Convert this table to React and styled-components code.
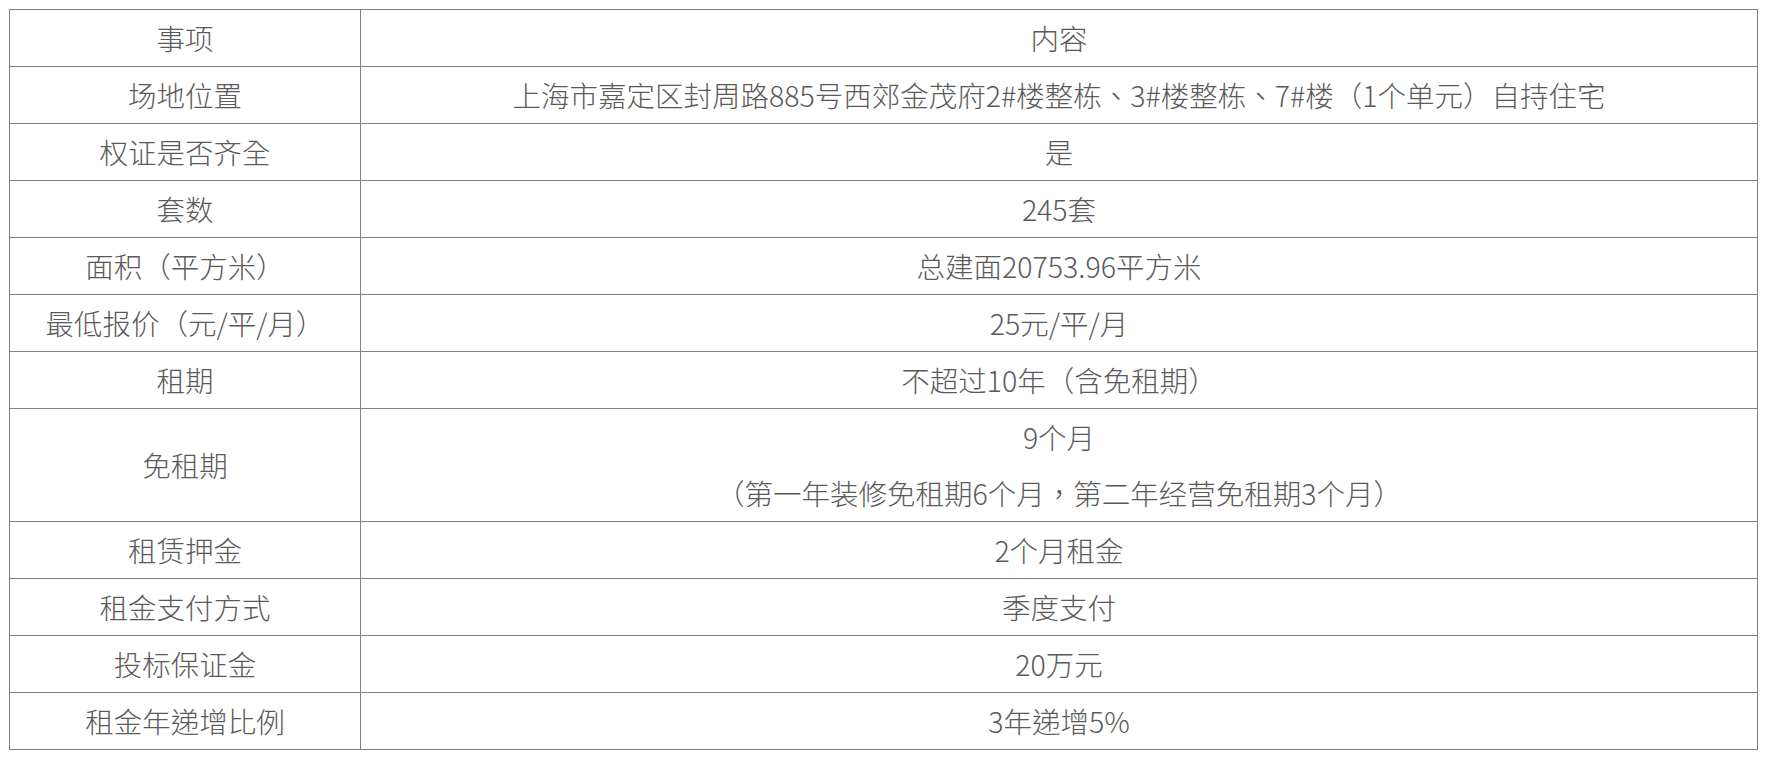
import React from 'react';
import styled, { createGlobalStyle } from 'styled-components';

const rows = [
  { label: '事项', value: ['内容'] },
  { label: '场地位置', value: ['上海市嘉定区封周路885号西郊金茂府2#楼整栋、3#楼整栋、7#楼（1个单元）自持住宅'] },
  { label: '权证是否齐全', value: ['是'] },
  { label: '套数', value: ['245套'] },
  { label: '面积（平方米）', value: ['总建面20753.96平方米'] },
  { label: '最低报价（元/平/月）', value: ['25元/平/月'] },
  { label: '租期', value: ['不超过10年（含免租期）'] },
  { label: '免租期', value: ['9个月', '（第一年装修免租期6个月，第二年经营免租期3个月）'] },
  { label: '租赁押金', value: ['2个月租金'] },
  { label: '租金支付方式', value: ['季度支付'] },
  { label: '投标保证金', value: ['20万元'] },
  { label: '租金年递增比例', value: ['3年递增5%'] },
];

const GlobalStyle = createGlobalStyle`
  html, body {
    margin: 0;
    padding: 0;
    background: #fff;
  }
`;

const Page = styled.div`
  padding: 9px 9px 10px 9px;
  font-family: "Noto Sans CJK TC", "Noto Sans CJK SC", "Noto Sans", sans-serif;
  font-weight: 300;
  font-size: 28.5px;
  color: #5a5a5a;
`;

const Grid = styled.div`
  display: grid;
  grid-template-columns: 351px 1fr;
  border-top: 1px solid #808080;
  border-left: 1px solid #808080;
`;

const Cell = styled.div`
  display: flex;
  flex-direction: column;
  align-items: center;
  justify-content: center;
  border-right: 1px solid #808080;
  border-bottom: 1px solid #808080;
  min-height: 56px;
  text-align: center;
`;

const Line = styled.div`
  line-height: 56px;
  height: 56px;
  white-space: nowrap;
  padding-bottom: 2px;
  box-sizing: border-box;
`;

export default function App() {
  return (
    <Page>
      <GlobalStyle />
      <Grid>
        {rows.map((r) => (
          <React.Fragment key={r.label}>
            <Cell>
              <Line>{r.label}</Line>
            </Cell>
            <Cell>
              {r.value.map((v) => (
                <Line key={v}>{v}</Line>
              ))}
            </Cell>
          </React.Fragment>
        ))}
      </Grid>
    </Page>
  );
}
